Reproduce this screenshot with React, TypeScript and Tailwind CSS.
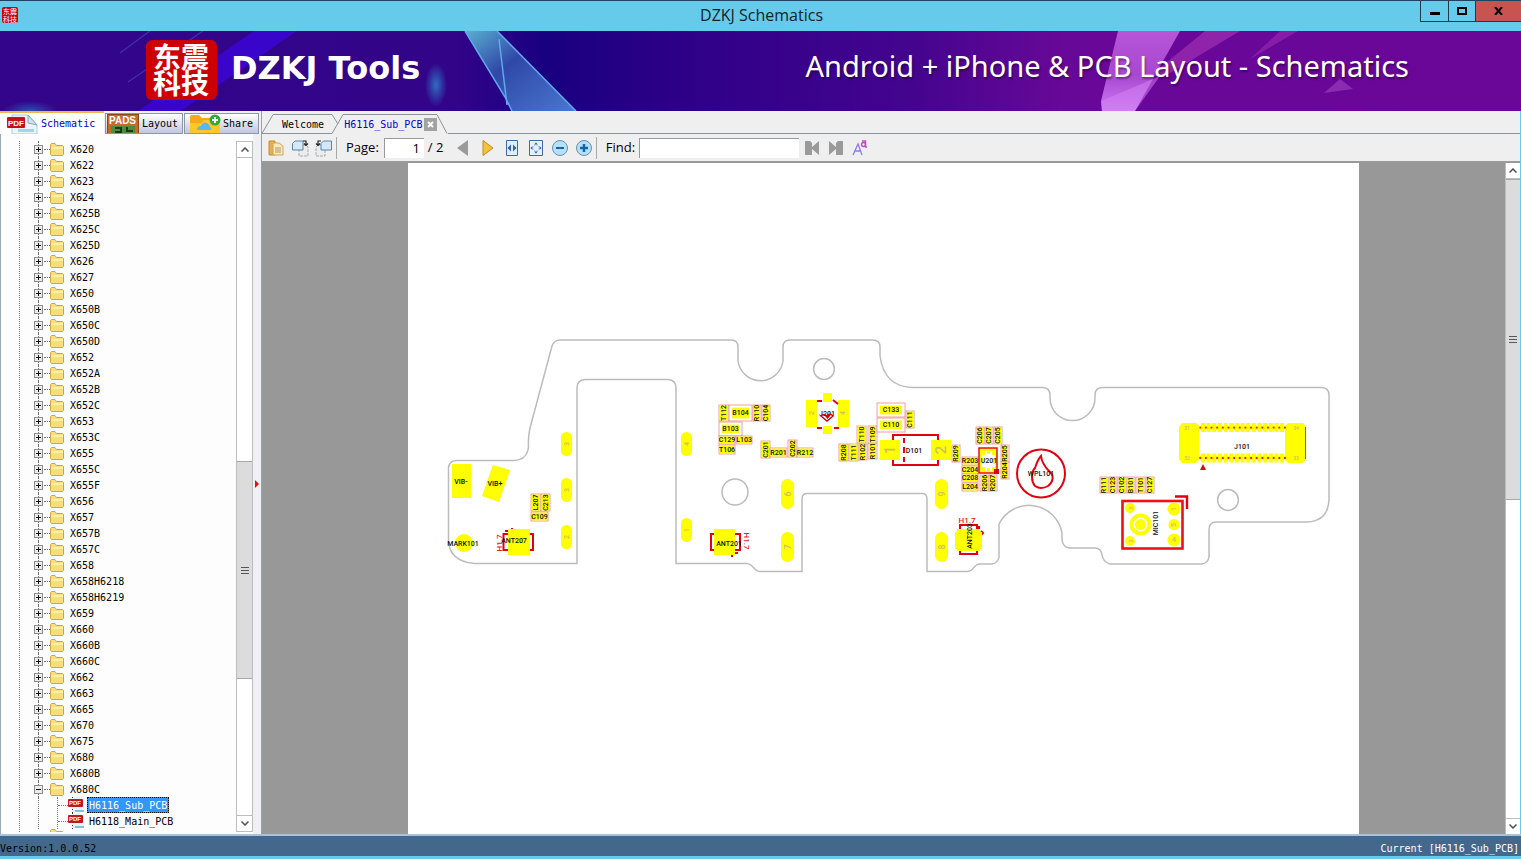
import { useState, type ReactNode } from 'react';

const folders = [
  'X620', 'X622', 'X623', 'X624', 'X625B', 'X625C', 'X625D', 'X626', 'X627', 'X650', 'X650B',
  'X650C', 'X650D', 'X652', 'X652A', 'X652B', 'X652C', 'X653', 'X653C', 'X655', 'X655C', 'X655F',
  'X656', 'X657', 'X657B', 'X657C', 'X658', 'X658H6218', 'X658H6219', 'X659', 'X660', 'X660B',
  'X660C', 'X662', 'X663', 'X665', 'X670', 'X675', 'X680', 'X680B', 'X680C',
];

const files = ['H6116_Sub_PCB', 'H6118_Main_PCB'];

type Part = [name: string, x: number, y: number, w: number, h: number];

// Small passives; the ones taller than wide carry a rotated label
const parts: Part[] = [
  ['L207', 531, 494, 10, 17], ['C213', 541, 494, 9, 17], ['C109', 531, 512, 17, 9],
  ['T112', 719, 405, 10, 16], ['B104', 729, 405, 23, 16], ['R110', 753, 405, 8, 16], ['C104', 762, 405, 8, 16],
  ['B103', 719, 422, 23, 14], ['C129', 719, 436, 16, 8], ['L103', 736, 436, 16, 8], ['T106', 719, 445, 16, 9],
  ['C201', 761, 441, 9, 17], ['R201', 770, 448, 17, 9], ['C202', 788, 440, 9, 17], ['R212', 797, 448, 16, 9],
  ['R208', 839, 444, 9, 17], ['T111', 849, 444, 9, 17], ['R102', 859, 444, 8, 16], ['R101', 868, 443, 9, 16],
  ['T110', 857, 426, 9, 17], ['T109', 868, 426, 9, 17], ['C133', 877, 403, 28, 14], ['C110', 877, 418, 28, 14],
  ['C111', 906, 411, 8, 17], ['R209', 952, 445, 8, 17], ['R203', 962, 457, 16, 8], ['C204', 962, 466, 16, 8],
  ['C208', 962, 474, 16, 8], ['L204', 962, 483, 16, 8], ['C206', 976, 427, 8, 17], ['C207', 985, 427, 8, 17],
  ['C205', 994, 427, 8, 17], ['R205', 1001, 445, 8, 17], ['R204', 1001, 462, 8, 17], ['R206', 980, 475, 9, 16],
  ['R207', 989, 475, 8, 16], ['R111', 1100, 477, 8, 16], ['C123', 1109, 477, 8, 16], ['C102', 1118, 477, 8, 16],
  ['B101', 1127, 477, 8, 16], ['T101', 1136, 477, 9, 16], ['C127', 1146, 477, 8, 16],
];

// Edge pads: number, x, y, width, height
const pads: Part[] = [
  ['3', 561, 432, 11, 24], ['3', 561, 478, 11, 24], ['2', 561, 525, 11, 24],
  ['4', 681, 432, 11, 24], ['1', 681, 518, 11, 24],
  ['6', 781, 479, 13, 30], ['7', 781, 532, 13, 30],
  ['9', 935, 479, 13, 30], ['8', 935, 532, 13, 30],
];

const connectorPins = Array.from({ length: 15 }, (_, i) => 1203 + i * 5.65);

interface LabelProps {
  x: number;
  y: number;
  children: string;
  rotate?: number;
  size?: number;
  fill?: string;
}

function Label({ x, y, children, rotate = 0, size = 7, fill = '#111' }: LabelProps) {
  return (
    <text
      x={x}
      y={y}
      fontSize={size}
      fill={fill}
      textAnchor="middle"
      dominantBaseline="central"
      transform={rotate ? `rotate(${rotate} ${x} ${y})` : undefined}
    >
      {children}
    </text>
  );
}

function Board() {
  return (
    <svg
      viewBox="408 163 951 670"
      className="w-full font-['Roboto','Liberation_Sans',sans-serif] font-medium"
      role="img"
      aria-label="H6116_Sub_PCB"
    >
      <g fill="none" stroke="#bcbcbc" strokeWidth="1.5">
        <path d="M560 340H731Q738 340 738 347V361A22.7 22.7 0 0 0 783 361V347Q783 340 790 340H873Q880 340 880 347V356Q884 387 913 387.500H1043Q1050 388 1050 395V398A22.500 22.500 0 0 0 1095 398V395Q1095 388 1102 387.500H1322Q1329 388 1329 395V500Q1328 521 1307 522H1216Q1209 522 1209 530V557Q1208 563 1202 564H1110Q1103 562 1102 555Q1101 548 1095 548H1069Q1063 547 1062 540V533A33.500 33.500 0 0 0 999 524V557Q998 563 992 564H979C974 564 974 571 968 571.500H927V499Q927 493 921 493.500H808Q802 493 802 499V571.500H759C754 571 753 564 747 563.500H676V388Q676 380 668 379.500H585Q577 380 577 388V563.500H474Q449 561 448.500 540V468Q449 461 456 460.500H514Q527 460 528.500 447Q528 436 530 428L552 346Q554 340 560 340Z" />
        <circle cx="824" cy="369" r="10.4" />
        <circle cx="735" cy="492" r="13" />
        <circle cx="1228" cy="500" r="10.4" />
      </g>

      {pads.map(([name, x, y, w, h]) => (
        <g key={`${x}-${y}`}>
          <rect x={x} y={y} width={w} height={h} rx={w / 2} fill="#ff0" />
          <Label x={x + w / 2} y={y + h / 2} rotate={-90} size={w - 4} fill="#cfc25a">{name}</Label>
        </g>
      ))}

      {parts.map(([name, x, y, w, h]) => {
        const inset = w > 20 ? 3 : 1;
        return (
          <g key={name}>
            <rect x={x} y={y} width={w} height={h} fill="#fff" stroke="#e88" strokeWidth="0.8" />
            <rect x={x + inset} y={y + inset - 0.4} width={w - inset * 2} height={h - inset * 2 + 0.8} fill="#ff0" />
            <Label x={x + w / 2} y={y + h / 2} rotate={h > w ? -90 : 0}>{name}</Label>
          </g>
        );
      })}

      <rect x="452" y="464" width="19" height="34" fill="#ff0" />
      <path d="M493 465L510 470L499 502L482 496Z" fill="#ff0" />
      <circle cx="464" cy="543" r="9" fill="#ff0" />
      <Label x={461} y={482}>VIB-</Label>
      <Label x={495} y={484}>VIB+</Label>
      <Label x={463} y={544}>MARK101</Label>

      {/* Antenna springs */}
      <g fill="none" stroke="#e00010" strokeWidth="2">
        <path d="M509 534H503.500V550H509M529 534H533V550H529M505 531H510M512 530V528" />
        <path d="M715 534H711V550H715M735 534H740V550H735M738 553H734M732 555V557" />
        <path d="M960 530V525H977V530M960 550V554H977V550M979 526V531M981 531L983 533L981 535" />
      </g>
      <rect x="508" y="529" width="22" height="26" fill="#ff0" />
      <rect x="714" y="529" width="21" height="26" fill="#ff0" />
      <path d="M957 529H980V532H982V549H980V551H957V549H955V532H957Z" fill="#ff0" />
      <Label x={514} y={541}>ANT207</Label>
      <Label x={729} y={544}>ANT201</Label>
      <Label x={970} y={536} rotate={-90}>ANT203</Label>
      <Label x={499} y={543} rotate={-90} size={8} fill="#d22">H1.7</Label>
      <Label x={746} y={541} rotate={90} size={8} fill="#d22">H1.7</Label>
      <Label x={967} y={520} size={8} fill="#d22">H1.7</Label>

      {/* J201 */}
      <g fill="#ff0">
        <rect x="806" y="400" width="11" height="27" />
        <rect x="838" y="400" width="11" height="27" />
        <rect x="823" y="393" width="9" height="9" />
        <rect x="823" y="426" width="9" height="8" />
      </g>
      <path d="M817 401H822M833 400L838 404M817 428H822M834 428H839" stroke="#e00010" strokeWidth="2" />
      <Label x={812} y={413} rotate={-90} fill="#cfc25a">2</Label>
      <Label x={843} y={413} rotate={-90} fill="#cfc25a">4</Label>
      <Label x={827} y={414}>J201</Label>
      <path d="M821 416C824 413 826 415 827 416C829 413 831 414 833 416L827 421Z" fill="none" stroke="#d00010" strokeWidth="1.4" />
      <path d="M825 416H830L827.500 419Z" fill="#d00010" />

      {/* D101 */}
      <path d="M893 442V435H938V442M893 459V465H938V459" fill="none" stroke="#e00010" strokeWidth="2" />
      <path d="M904 438V443M904 447V453M904 457V462" stroke="#e00010" strokeWidth="2" />
      <rect x="880" y="440" width="20" height="20" fill="#ff0" />
      <rect x="931" y="440" width="20" height="20" fill="#ff0" />
      <Label x={890} y={450} rotate={-90} size={15} fill="#cfc25a">1</Label>
      <Label x={941} y={450} rotate={-90} size={15} fill="#cfc25a">2</Label>
      <Label x={914} y={451}>D101</Label>

      {/* U201 */}
      <rect x="979" y="448" width="18" height="25" fill="#ff0" stroke="#e00010" strokeWidth="1.4" />
      <path d="M982 455H985V451H987V454H990V451H992V455H995V458H993V464H995V467H992V471H990V468H987V471H985V467H982V464H984V458H982Z" fill="#fff" />
      <rect x="994" y="469" width="5" height="5" fill="#e00010" />
      <Label x={989} y={461}>U201</Label>

      <g fill="none" stroke="#e00010" strokeWidth="2">
        <circle cx="1041" cy="473.500" r="24" />
        <path d="M1041 456Q1038 459 1035 468C1031 472 1031 481 1035 486Q1041 490 1048 486C1054 481 1054 475 1049 471Q1042 464 1041 456Z" />
      </g>
      <Label x={1041} y={474}>WPL101</Label>

      {/* J101 */}
      <g fill="#ff0">
        <path d="M1182 423H1196L1199 426V460L1196 463H1182L1179 459V427Z" />
        <path d="M1288 423H1303L1306 427V459L1303 463H1288L1285 460V426Z" />
        {connectorPins.map((x) => (
          <path key={x} d={`M${x - 2} 423H${x + 2}V432H${x - 2}ZM${x - 2} 453.500H${x + 2}V462.500H${x - 2}Z`} />
        ))}
        {connectorPins.map((x) => (
          <path key={x} d={`M${x - 3} 426H${x + 3}V430H${x - 3}ZM${x - 3} 456H${x + 3}V460H${x - 3}Z`} />
        ))}
      </g>
      <path d="M1199.300 427.700H1286M1199.300 458H1286" stroke="#e02000" strokeWidth="1.800" strokeDasharray="1.800 3.850" />
      <path d="M1305.500 427V459" stroke="#d40" strokeWidth="1" />
      <path d="M1203 464L1206 470H1200Z" fill="#e00010" />
      <Label x={1187} y={428} size={5} fill="#cfc25a">31</Label>
      <Label x={1187} y={458} size={5} fill="#cfc25a">32</Label>
      <Label x={1296} y={428} size={5} fill="#cfc25a">34</Label>
      <Label x={1296} y={458} size={5} fill="#cfc25a">33</Label>
      <Label x={1242} y={447}>J101</Label>

      {/* MIC101 */}
      <rect x="1122.500" y="501" width="60" height="47.500" fill="none" stroke="#f01018" strokeWidth="2.6" />
      <path d="M1175 496.500H1187V509" fill="none" stroke="#e00010" strokeWidth="2.400" />
      <circle cx="1140.500" cy="524.500" r="9" fill="none" stroke="#ff0" strokeWidth="4" />
      <g fill="#ff0">
        <circle cx="1140.500" cy="524.500" r="5.500" />
        <circle cx="1130" cy="508" r="5" />
        <circle cx="1130" cy="541" r="5" />
        <circle cx="1174" cy="509" r="6.500" />
        <circle cx="1174" cy="524.500" r="5.500" />
        <circle cx="1174" cy="540" r="6.500" />
      </g>
      <Label x={1130} y={508} rotate={-90} size={6} fill="#cfc25a">2</Label>
      <Label x={1130} y={541} rotate={-90} size={6} fill="#cfc25a">3</Label>
      <Label x={1174} y={509} rotate={-90} fill="#cfc25a">1</Label>
      <Label x={1174} y={525} rotate={-90} fill="#cfc25a">5</Label>
      <Label x={1174} y={540} fill="#cfc25a">4</Label>
      <Label x={1156} y={523} rotate={-90}>MIC101</Label>
    </svg>
  );
}

function BannerArt() {
  return (
    <svg viewBox="0 0 1521 80" preserveAspectRatio="none" className="absolute inset-0 h-full w-full" aria-hidden="true">
      <defs>
        <linearGradient id="bg">
          <stop offset="0" stopColor="#32058a" />
          <stop offset="0.3" stopColor="#320488" />
          <stop offset="0.36" stopColor="#180080" />
          <stop offset="0.45" stopColor="#2e0088" />
          <stop offset="0.6" stopColor="#44048e" />
          <stop offset="0.7" stopColor="#680898" />
          <stop offset="1" stopColor="#6a0698" />
        </linearGradient>
        <linearGradient id="shard" x1="0" y1="0" x2="1" y2="1">
          <stop offset="0" stopColor="#5ab0d0" />
          <stop offset="0.4" stopColor="#3048a8" />
          <stop offset="1" stopColor="#4878d0" />
        </linearGradient>
        <linearGradient id="pink" x1="0" y1="0" x2="0" y2="1">
          <stop offset="0" stopColor="#b855d8" />
          <stop offset="0.55" stopColor="#a848d0" />
          <stop offset="1" stopColor="#cc78f4" />
        </linearGradient>
        <radialGradient id="spot">
          <stop offset="0" stopColor="#2e86d0" stopOpacity="0.8" />
          <stop offset="1" stopColor="#2e86d0" stopOpacity="0" />
        </radialGradient>
      </defs>
      <rect width="1521" height="80" fill="url(#bg)" />
      <path d="M254 0H297L181 80H138Z" fill="#3c06e0" opacity="0.75" />
      <path d="M203 0L128 51M150 0L120 22" stroke="#4a3cb4" strokeWidth="1.500" opacity="0.7" />
      <ellipse cx="30" cy="80" rx="28" ry="10" fill="url(#spot)" opacity="0.7" />
      <ellipse cx="436" cy="54" rx="11" ry="22" fill="url(#spot)" />
      <path d="M465 0H497L576 80H512L505 66Z" fill="url(#shard)" />
      <path d="M465 0L505 66L512 80M497 0L576 80M499 8L507 74" fill="none" stroke="#62a8ec" strokeWidth="1.500" />
      <path d="M1118 0H1180L1135 80H1102L1101 70Z" fill="url(#pink)" />
      <path d="M1101 70L1160 45L1135 80H1102Z" fill="#d684f4" opacity="0.5" />
      <path d="M1205 0H1240L1165 45H1150Z" fill="#a030b4" opacity="0.7" />
      <path d="M1280 0H1298L1250 28Z" fill="#9a2cb4" opacity="0.6" />
      <path d="M1340 48L1353 58L1324 62Z" fill="#8a2cb0" />
    </svg>
  );
}

function FolderIcon() {
  return (
    <svg width="14" height="13" viewBox="0 0 14 13" aria-hidden="true">
      <path d="M0.500 11.500V1.500L1.500 0.500H5L6.500 2.500H12.500L13.500 3.500V11.500L12.500 12.500H1.500Z" fill="#f9dc7c" stroke="#cfa444" />
      <path d="M1 4H13V6H1Z" fill="#fff0ac" />
    </svg>
  );
}

function PdfFileIcon() {
  return (
    <svg width="17" height="16" viewBox="0 0 17 16" aria-hidden="true">
      <path d="M4 0H12L16 3V15H4Z" fill="#e6f4f8" />
      <path d="M7 13H16V15H7Z" fill="#7cc4dc" />
      <path d="M4.500 0V16" stroke="#333" strokeDasharray="1 2" />
      <rect x="0" y="2" width="15" height="8" rx="1" fill="#c01820" />
      <text x="1" y="8" fontSize="6" fontWeight="bold" fill="#fff" className="font-['Liberation_Sans',sans-serif]">PDF</text>
    </svg>
  );
}

function Expander({ open }: { open?: boolean }) {
  return (
    <svg width="9" height="9" viewBox="0 0 9 9" aria-hidden="true">
      <rect x="0.500" y="0.500" width="8" height="8" fill="#ececec" stroke="#8c8c8c" />
      <path d={open ? 'M2 4.500H7' : 'M2 4.500H7M4.500 2V7'} stroke="#111" />
    </svg>
  );
}

function Chevron({ up }: { up?: boolean }) {
  return (
    <svg width="8" height="5" viewBox="0 0 8 5" aria-hidden="true">
      <path d={up ? 'M0.500 4.500L4 1L7.500 4.500' : 'M0.500 0.500L4 4L7.500 0.500'} fill="none" stroke="#505050" strokeWidth="1.500" />
    </svg>
  );
}

function Grip() {
  return (
    <svg width="8" height="8" viewBox="0 0 8 8" aria-hidden="true">
      <path d="M0 1.500H8M0 4.500H8M0 7.500H8" stroke="#555" />
    </svg>
  );
}

interface ScrollBarProps {
  before: string;
  thumb: string;
  after: string;
  className: string;
}

function ScrollBar({ before, thumb, after, className }: ScrollBarProps) {
  return (
    <div className={`flex shrink-0 flex-col border-[#bdbdbd] bg-white ${className}`}>
      <button aria-label="Scroll up" className="flex h-4 items-center justify-center border-b border-[#bdbdbd]"><Chevron up /></button>
      <div className={before} />
      <div className={`flex basis-0 items-center justify-center border-y border-[#a8a8a8] bg-[#dcdcdc] ${thumb}`}><Grip /></div>
      <div className={after} />
      <button aria-label="Scroll down" className="flex h-4 items-center justify-center border-t border-[#bdbdbd]"><Chevron /></button>
    </div>
  );
}

function Tree() {
  const [selected, setSelected] = useState(files[0]);
  return (
    <ul className="ml-[18px] flex-1 overflow-hidden border-l border-dotted border-[#777] pl-[13px]">
      {folders.map((name) => (
        <li key={name}>
          <button className="flex h-4 items-center">
            <span className="flex h-4 w-[11px] flex-col items-center">
              <span className="h-[4px] border-l border-dotted border-[#777]" />
              <Expander open={name === 'X680C'} />
              <span className="h-[3px] border-l border-dotted border-[#777]" />
            </span>
            <span className="w-[6px] border-t border-dotted border-[#777]" />
            <FolderIcon />
            <span className="pl-[6px]">{name}</span>
          </button>
        </li>
      ))}
      <li className="ml-[5px] border-l border-dotted border-[#777] pl-[18px]">
        <ul className="w-fit border-l border-dotted border-[#777]">
          {files.map((name) => (
            <li key={name} className="flex h-4 items-center">
              <span className="w-[10px] border-t border-dotted border-[#777]" />
              <PdfFileIcon />
              <button
                onClick={() => setSelected(name)}
                className={
                  name === selected
                    ? 'ml-[2px] h-4 border border-dotted border-black bg-[#3296fa] px-px text-white'
                    : 'ml-[2px] h-4 px-[2px]'
                }
              >
                {name}
              </button>
            </li>
          ))}
        </ul>
      </li>
      <li className="h-4 pl-[17px]">
        <FolderIcon />
      </li>
    </ul>
  );
}

function SideTabs() {
  return (
    <div className="flex h-[23px] items-end gap-px bg-[#eef0f4] text-black">
      <button className="flex h-[23px] w-[104px] items-center gap-[3px] border-t-2 border-[#f4b44c] bg-white pl-[6px] text-[#0000d0]">
        <svg width="32" height="20" viewBox="0 0 32 20" aria-hidden="true">
          <path d="M6 1H22L31 11V20H6Z" fill="#eaf5fb" stroke="#a8cce0" />
          <path d="M22 1V9L31 11Z" fill="#cfe4f0" stroke="#88a8bc" />
          <path d="M12 15H28V18H12Z" fill="#a4d4ea" />
          <rect x="1" y="3" width="18" height="11" rx="1" fill="#c4121c" />
          <text x="2" y="12" fontSize="8" fontWeight="bold" fill="#fff" className="font-['Liberation_Sans',sans-serif]">PDF</text>
        </svg>
        Schematic
      </button>
      <button className="flex h-[21px] w-[78px] items-center gap-[3px] border border-[#8c98a8] bg-linear-to-b from-white to-[#c2c6e0] pl-px">
        <svg width="32" height="19" viewBox="0 0 32 19" aria-hidden="true">
          <rect x="0.500" y="0.500" width="31" height="20" fill="#c8692c" stroke="#8a4818" />
          <path d="M4 12H28V19H4Z" fill="#4c8c3c" />
          <path d="M8 14H14V18H8M20 13V17H26" fill="none" stroke="#183818" strokeWidth="2" />
          <text x="2" y="10" fontSize="10" fontWeight="bold" fill="#fff" className="font-['Liberation_Sans',sans-serif]">PADS</text>
        </svg>
        Layout
      </button>
      <button className="flex h-[21px] w-[75px] items-center gap-[2px] border border-[#8c98a8] bg-linear-to-b from-white to-[#c2c6e0] pl-1">
        <svg width="32" height="19" viewBox="0 0 32 19" aria-hidden="true">
          <path d="M1 17V3Q1 1 3 1H10L13 4H28Q30 4 30 6V17Z" fill="#f8a818" />
          <path d="M1 19V9H12L15 6H31V19Z" fill="#ffc828" />
          <path d="M8 16Q8 12 12 12Q14 7 18 9Q21 11 21 13Q23 14 22 16Z" fill="#5ab8f0" />
          <circle cx="26" cy="6" r="5.500" fill="#38a838" />
          <path d="M26 3V9M23 6H29" stroke="#fff" strokeWidth="2" />
        </svg>
        Share
      </button>
    </div>
  );
}

function DocumentTabs() {
  return (
    <div role="tablist" className="flex h-[23px] items-end">
      <svg width="12" height="20" viewBox="0 0 12 20" aria-hidden="true">
        <path d="M0 19.500L11 0.500H12M0 19.500H12" fill="none" stroke="#8a929a" />
      </svg>
      <button role="tab" className="h-5 border-y border-[#8a929a] px-2 text-black">Welcome</button>
      <svg width="12" height="20" viewBox="0 0 12 20" aria-hidden="true">
        <path d="M0 0.500L6 10M0 19.500L11 0.500H12" fill="none" stroke="#8a929a" />
      </svg>
      <div className="flex h-5 items-center gap-[2px] border-t border-[#8a929a]">
        <button role="tab" aria-selected="true" className="text-[#0000d0]">H6116_Sub_PCB</button>
        <button aria-label="Close tab" className="flex size-[13px] items-center justify-center bg-[#a2a2a2]">
          <svg width="7" height="7" viewBox="0 0 7 7"><path d="M1 1L6 6M6 1L1 6" stroke="#fff" strokeWidth="1.800" /></svg>
        </button>
      </div>
      <svg width="11" height="20" viewBox="0 0 11 20" aria-hidden="true">
        <path d="M0 0.500L10 19.500" fill="none" stroke="#8a929a" />
      </svg>
      <span className="flex-1 border-b border-[#8a929a]" />
    </div>
  );
}

function ToolButton({ label, children }: { label: string; children: ReactNode }) {
  return (
    <button aria-label={label} className="flex h-6 w-6 items-center justify-center">
      <svg width="18" height="18" viewBox="0 0 18 18" fill="none">{children}</svg>
    </button>
  );
}

function Toolbar() {
  return (
    <div className="flex h-[29px] items-center border-b-2 border-[#999] pl-[2px] font-['Open_Sans','Noto_Sans',sans-serif] text-[13px] text-black">
      <ToolButton label="Open">
        <path d="M2 2H8V16H2Z" fill="#e8ae4c" stroke="#c98c34" />
        <path d="M6 4H12L16 7V16H6Z" fill="#fae8b8" stroke="#c8a860" />
        <path d="M8 9H14M8 11H14M8 13H14" stroke="#b8986c" />
      </ToolButton>
      <ToolButton label="Rotate left">
        <path d="M8 6H15L17 8V17H8Z" fill="#ececec" stroke="#a8a8a8" strokeDasharray="3 1" />
        <path d="M4 2H12V11H1.500V4.500Z" fill="#d4e8f8" stroke="#5a84ac" />
        <path d="M12 2H15V6M13 4.500L15 6.500L17 4.500" stroke="#222" strokeWidth="1.200" />
      </ToolButton>
      <ToolButton label="Rotate right">
        <path d="M3 6H10V17H1V8Z" fill="#ececec" stroke="#a8a8a8" strokeDasharray="3 1" />
        <path d="M8.500 2H16.500V11H6V4.500Z" fill="#d4e8f8" stroke="#5a84ac" />
        <path d="M6 2H3V6M1 4.500L3 6.500L5 4.500" stroke="#222" strokeWidth="1.200" />
      </ToolButton>
      <span className="h-[22px] w-px bg-[#a8a8a8]" />
      <label htmlFor="page" className="pl-[9px]">Page:</label>
      <input id="page" defaultValue="1" className="ml-[5px] h-5 w-10 border-t border-l border-[#999] bg-white pr-1 text-right outline-none" />
      <span className="w-[27px] pl-1">/ 2</span>
      <ToolButton label="Previous page"><path d="M14 1V17L3 9Z" fill="#9a9a9a" /></ToolButton>
      <span className="w-px" />
      <ToolButton label="Next page"><path d="M4 1.500V16.500L14 9Z" fill="#f4c23c" stroke="#c08828" /></ToolButton>
      <ToolButton label="Fit width">
        <path d="M3.500 1.500H14.500V16.500H3.500Z" fill="#dceefb" stroke="#3c6ca4" />
        <path d="M8 5.500V12.500L4.500 9ZM10 5.500V12.500L13.500 9Z" fill="#2c64a4" />
      </ToolButton>
      <ToolButton label="Fit page">
        <path d="M2.500 1.500H15.500V16.500H2.500Z" fill="#e4f0fa" stroke="#3c6ca4" />
        <path d="M7 5.500L9 3.500L11 5.500ZM7 12.500L9 14.500L11 12.500ZM5.500 7L3.500 9L5.500 11ZM12.500 7L14.500 9L12.500 11Z" fill="#2c64a4" />
        <circle cx="9" cy="9" r="3" stroke="#88a8c8" strokeDasharray="1 1" />
      </ToolButton>
      <ToolButton label="Zoom out">
        <circle cx="9" cy="9" r="7.500" fill="#b4e0fa" stroke="#6890ac" />
        <path d="M5 9H13" stroke="#1464a8" strokeWidth="2" />
      </ToolButton>
      <ToolButton label="Zoom in">
        <circle cx="9" cy="9" r="7.500" fill="#b4e0fa" stroke="#6890ac" />
        <path d="M5 9H13M9 5V13" stroke="#1464a8" strokeWidth="2.400" />
      </ToolButton>
      <span className="h-[22px] w-px bg-[#a8a8a8]" />
      <label htmlFor="find" className="pl-[9px]">Find:</label>
      <input id="find" className="ml-1 h-5 w-40 border-t border-l border-[#999] bg-white px-1 outline-none" />
      <span className="w-px" />
      <ToolButton label="Find previous"><path d="M2 2H7L9 4V8L16 2V16L9 10V16H2Z" fill="#9a9a9a" /></ToolButton>
      <ToolButton label="Find next"><path d="M16 2H11L9 4V8L2 2V16L9 10V16H16Z" fill="#9a9a9a" /></ToolButton>
      <ToolButton label="Match case">
        <path d="M2 16L7 5L11 16M4 12H10" stroke="#8c7ce8" strokeWidth="1.300" />
        <circle cx="12.500" cy="5.500" r="2" stroke="#c050b8" strokeWidth="1.400" />
        <path d="M11 2H14.500V8H16" stroke="#c050b8" strokeWidth="1.400" />
      </ToolButton>
    </div>
  );
}

function TitleBar() {
  return (
    <header className="flex h-[31px] shrink-0 border-t border-[#1a4460] bg-[#66caeb]">
      <div className="flex-1 pt-[6px] pl-[2px]">
        <p className="size-4 overflow-hidden rounded-xs bg-[#c8000c] pl-px font-['Noto_Sans_CJK_SC',sans-serif] text-[7px] leading-[8px] break-all text-white">
          东震科技
        </p>
      </div>
      <h1 className="font-['Open_Sans','Noto_Sans',sans-serif] text-[16px] leading-[29px] text-[#10242c]">DZKJ Schematics</h1>
      <div className="flex flex-1 items-start justify-end">
        <button aria-label="Minimize" className="flex h-[21px] w-[29px] items-center justify-center border border-t-0 border-[#1c3c4c]">
          <span className="mt-1 h-[3px] w-[10px] bg-black" />
        </button>
        <button aria-label="Maximize" className="flex h-[21px] w-[26px] items-center justify-center border-b border-[#1c3c4c]">
          <span className="h-2 w-[10px] border-2 border-black" />
        </button>
        <button aria-label="Close" className="flex h-[21px] w-[46px] items-center justify-center border-b border-l border-[#1c3c4c] bg-[#c75450]">
          <svg width="9" height="8" viewBox="0 0 9 8"><path d="M1 0L8 8M8 0L1 8" stroke="#000" strokeWidth="2" /></svg>
        </button>
      </div>
    </header>
  );
}

export default function App() {
  return (
    <div className="flex h-screen flex-col overflow-hidden border-b-[3px] border-[#66caeb] bg-[#efeff0] font-['DejaVu_Sans_Mono','Liberation_Mono',monospace] text-[10px] text-black">
      <TitleBar />

      <div className="relative h-20 shrink-0 overflow-hidden">
        <BannerArt />
        <div className="relative flex h-full items-center pr-[112px] pb-[2px] pl-[146px] text-white">
          <p className="h-[60px] w-[71px] rounded-md bg-[#cc0004] px-[7px] pt-[3px] font-['Noto_Sans_CJK_SC',sans-serif] text-[28px] leading-[26px] font-bold break-all">
            东震科技
          </p>
          <h2 className="flex-1 pb-1 pl-[14px] font-['DejaVu_Sans',sans-serif] text-[32px] font-bold">DZKJ Tools</h2>
          <p className="pb-2 font-['Noto_Sans',sans-serif] text-[29px] text-shadow-[1px_2px_2px_#0006]">Android + iPhone &amp; PCB Layout - Schematics</p>
        </div>
      </div>

      <div className="flex min-h-0 flex-1 border-r border-[#66caeb]">
        <aside className="flex w-[261px] shrink-0 flex-col">
          <SideTabs />
          <div className="flex min-h-0 flex-1 border-l border-[#9aaab8] bg-[#fdfdfe]">
            <div className="mt-[7px] mb-[2px] flex min-h-0 flex-1">
              <Tree />
              <ScrollBar className="w-[17px] border" before="grow-[304]" thumb="grow-[217]" after="grow-[137]" />
            </div>
            <div className="flex w-2 items-center bg-[#eff0f4] pl-[2px]">
              <svg width="5" height="8" viewBox="0 0 5 8" aria-hidden="true"><path d="M0 0L4 4L0 8Z" fill="#e01010" /></svg>
            </div>
          </div>
        </aside>

        <main className="flex min-w-0 flex-1 flex-col border-l border-[#9aa0a6]">
          <DocumentTabs />
          <Toolbar />
          <div className="flex min-h-0 flex-1 bg-[#989898]">
            <div className="flex min-w-0 flex-1 justify-center overflow-hidden">
              <div className="w-[951px] max-w-full bg-white">
                <Board />
              </div>
            </div>
            <ScrollBar className="w-[15px] border-l" before="grow-0" thumb="grow-[320]" after="grow-[320]" />
          </div>
        </main>
      </div>

      <footer className="flex h-[22px] shrink-0 items-end justify-between border-t-2 border-[#b8bec8] bg-[#44688c] pr-[2px] leading-[14px]">
        <span>Version:1.0.0.52</span>
        <span className="text-white">Current [H6116_Sub_PCB]</span>
      </footer>
    </div>
  );
}
